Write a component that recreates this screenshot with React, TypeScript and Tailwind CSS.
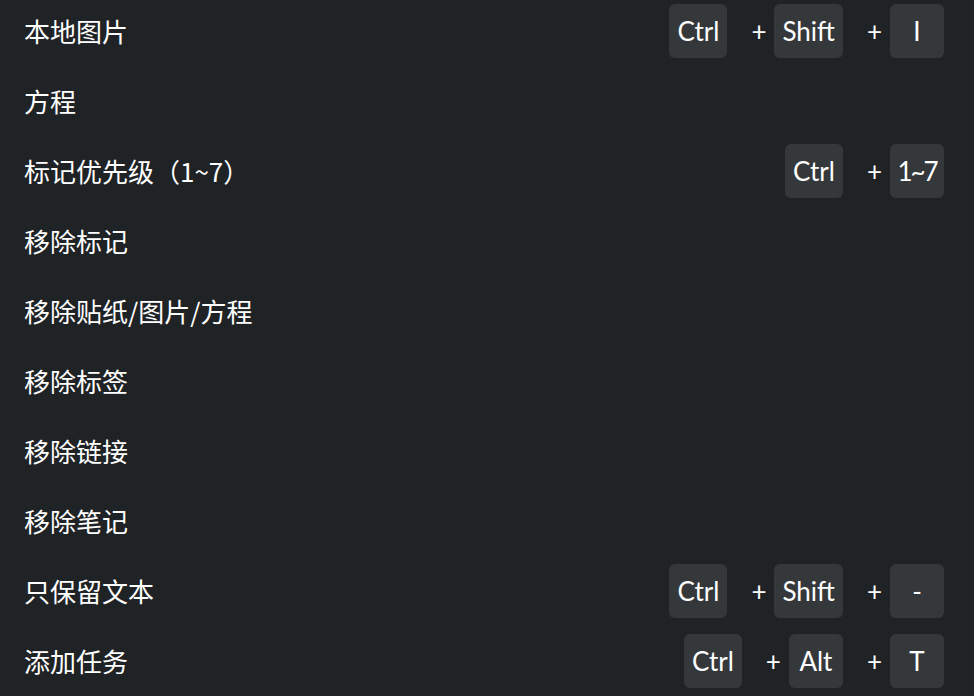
import React from 'react';

type Row = { label: string; keys?: string[] };

const rows: Row[] = [
  { label: '本地图片', keys: ['Ctrl', 'Shift', 'I'] },
  { label: '方程' },
  { label: '标记优先级（1~7）', keys: ['Ctrl', '1~7'] },
  { label: '移除标记' },
  { label: '移除贴纸/图片/方程' },
  { label: '移除标签' },
  { label: '移除链接' },
  { label: '移除笔记' },
  { label: '只保留文本', keys: ['Ctrl', 'Shift', '-'] },
  { label: '添加任务', keys: ['Ctrl', 'Alt', 'T'] },
];

const Key: React.FC<{ k: string }> = ({ k }) => (
  <span
    className={
      k === '1~7'
        ? 'flex h-[54px] min-w-[54px] items-center justify-center rounded-[6px] bg-[#35383b] px-1 text-[26px] tracking-[-2px] text-white'
        : 'flex h-[54px] min-w-[54px] items-center justify-center rounded-[6px] bg-[#35383b] px-2 text-[26px] text-white'
    }
  >
    {k}
  </span>
);

export default function App() {
  return (
    <div
      className="h-[696px] w-full overflow-hidden bg-[#202326] text-white"
      style={{ fontFamily: 'Lato, "Noto Sans CJK SC", sans-serif' }}
    >
      <div className="-mt-1 flex flex-col pl-6 pr-[30px]">
        {rows.map((row) => (
          <div key={row.label} className="flex h-[70px] items-center justify-between">
            <span className="text-[26px] leading-none" style={{ fontFamily: '"Noto Sans CJK SC", sans-serif' }}>
              {row.label}
            </span>
            {row.keys && (
              <div className="flex items-center">
                {row.keys.map((k, i) => (
                  <React.Fragment key={k + i}>
                    {i > 0 && <span className="pl-6 pr-2 text-[26px] leading-none">+</span>}
                    <Key k={k} />
                  </React.Fragment>
                ))}
              </div>
            )}
          </div>
        ))}
      </div>
    </div>
  );
}
